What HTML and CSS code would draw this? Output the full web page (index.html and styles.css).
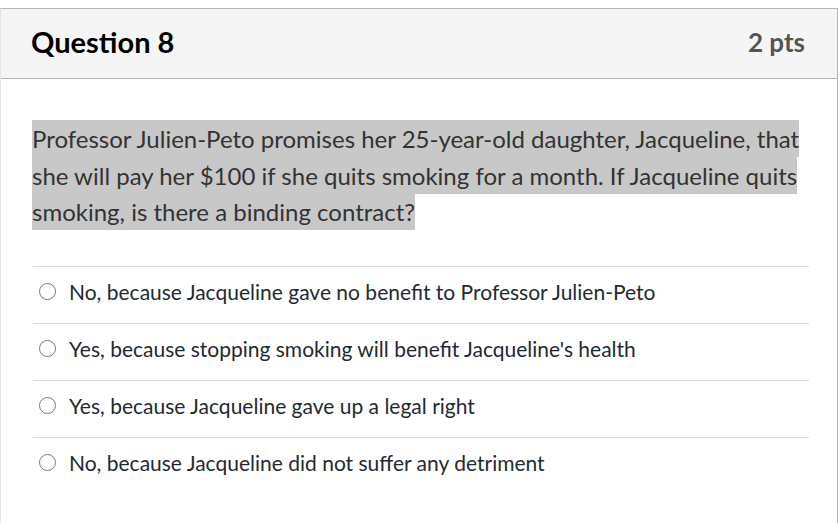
FILE: index.html
```html
<!DOCTYPE html>
<html>
<head>
<meta charset="utf-8">
<link rel="stylesheet" href="styles.css">
</head>
<body>
<div class="card">
  <div class="header">
    <h2 class="title">Question 8</h2>
    <span class="pts">2 pts</span>
  </div>
  <div class="content">
    <p class="question"><span class="hl">Professor Julien-Peto promises her 25-year-old daughter, Jacqueline, that she will pay her $100 if she quits smoking for a month. If Jacqueline quits smoking, is there a binding contract?</span></p>
    <ul class="answers">
      <li class="answer"><span class="radio"></span><span class="label">No, because Jacqueline gave no benefit to Professor Julien-Peto</span></li>
      <li class="answer"><span class="radio"></span><span class="label">Yes, because stopping smoking will benefit Jacqueline's health</span></li>
      <li class="answer"><span class="radio"></span><span class="label">Yes, because Jacqueline gave up a legal right</span></li>
      <li class="answer"><span class="radio"></span><span class="label">No, because Jacqueline did not suffer any detriment</span></li>
    </ul>
  </div>
</div>
</body>
</html>
```
FILE: styles.css
```css
html, body {
  margin: 0;
  padding: 0;
  background: #fff;
}
body {
  font-family: Lato, "Open Sans", "Liberation Sans", sans-serif;
  color: #2d3b45;
}
.card {
  margin-top: 8px;
  width: 836px;
  height: 514px;
  border: 1px solid #b5b5b5;
  border-left-color: #e4e4e4;
  border-bottom: none;
  overflow: hidden;
}
.header {
  height: 69px;
  background: #f5f5f5;
  border-bottom: 1px solid #b5b5b5;
  display: flex;
  align-items: center;
  justify-content: space-between;
  padding: 0 32px 0 30px;
}
.title {
  margin: 0 0 4px;
  font-size: 29px;
  font-weight: 700;
  color: #000;
}
.pts {
  margin-bottom: 4px;
  font-size: 26px;
  font-weight: 700;
  color: #555;
}
.content {
  padding: 42px 0 0 31px;
}
.question {
  margin: 0;
  font-size: 24px;
  line-height: 36.5px;
  width: 780px;
  color: #333;
}
.hl {
  background: #c8c8c8;
  padding: 4px 0;
}
.answers {
  list-style: none;
  margin: 35px 0 0 1px;
  padding: 0;
  width: 776px;
}
.answer {
  border-top: 1px solid #dcdcdc;
  height: 50px;
  padding-bottom: 6px;
  display: flex;
  align-items: center;
  font-size: 21px;
  color: #1f2a33;
}
.radio {
  width: 15px;
  height: 15px;
  border: 1.5px solid #777;
  border-radius: 50%;
  margin: 0 13px 0 6px;
  flex: none;
}
```
